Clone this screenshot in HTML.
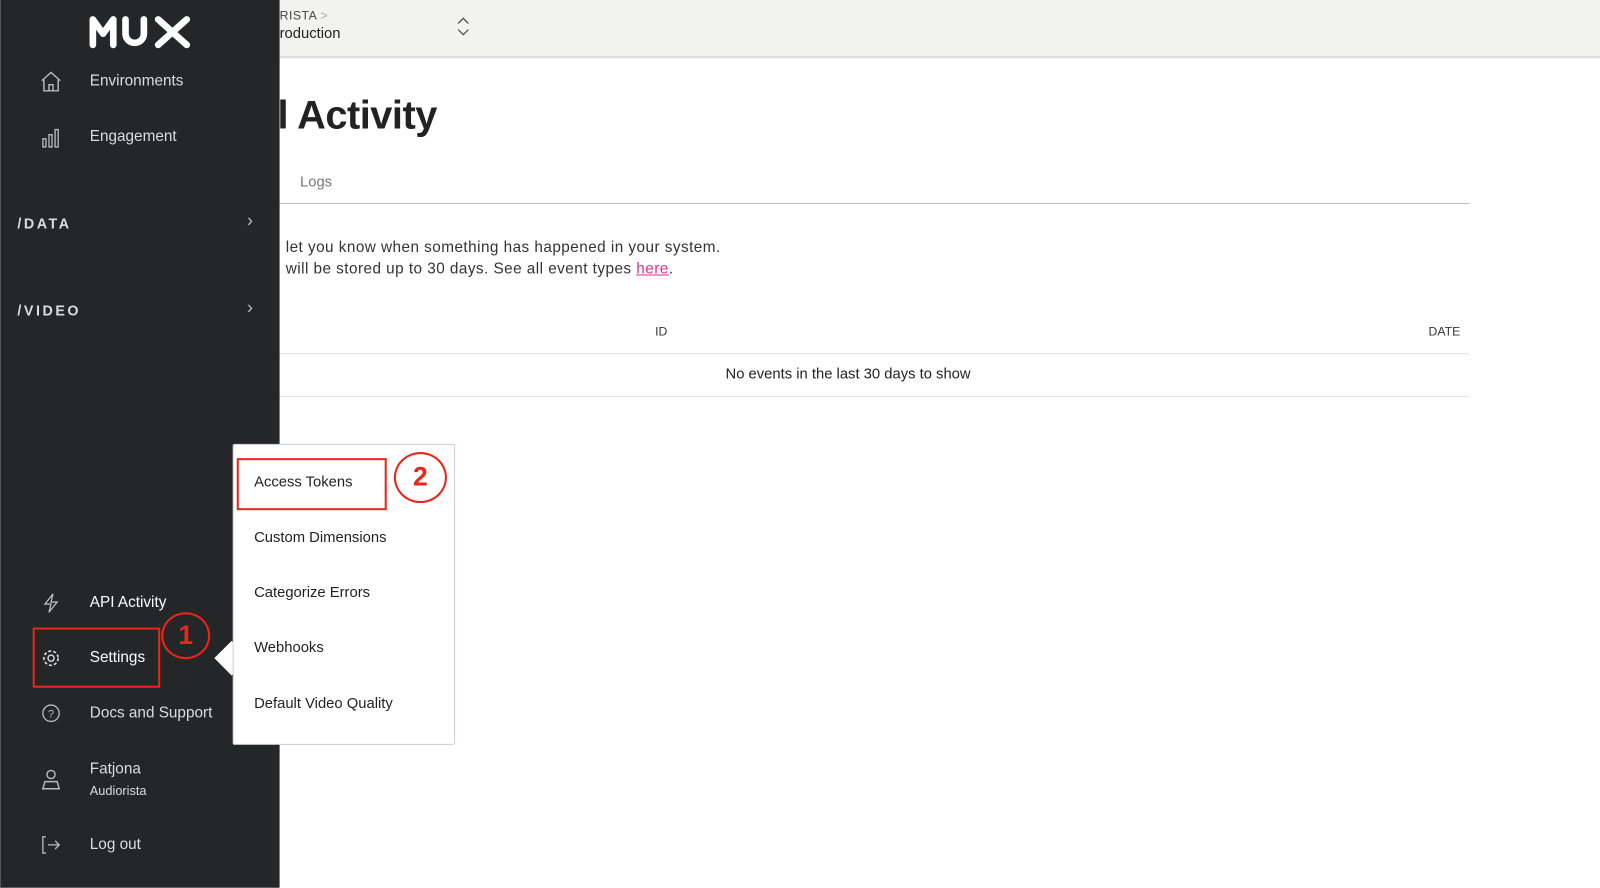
<!DOCTYPE html>
<html><head><meta charset="utf-8"><style>
*{margin:0;padding:0;box-sizing:border-box}
html,body{width:1600px;height:887px;overflow:hidden;background:#fff}
#wrap{position:absolute;left:0;top:0;width:1568px;height:870px;transform:scale(1.0204);transform-origin:0 0;font-family:"Liberation Sans",sans-serif;color:#222}
.abs{position:absolute;white-space:nowrap}
#side{position:absolute;left:0;top:0;width:274px;height:870px;background:#252628;border-left:1px solid #555}
.nav{position:absolute;left:87px;font-size:15px;color:#ddd}
.ico{position:absolute;left:38px}
.sec{position:absolute;left:16px;font-size:14px;font-weight:bold;letter-spacing:2.5px;color:#ddd}
.chev{position:absolute;left:241px;color:#bbb;font-size:18px}
#hdr{position:absolute;left:274px;top:0;width:1300px;height:57px;background:#f2f2f1;border-bottom:2px solid #dcdce2}
#menu{position:absolute;left:228px;top:435px;width:218px;height:295px;background:#fff;border:1px solid #ccd;border-radius:2px}
.mi{position:absolute;left:20px;font-size:14.5px;color:#222}
.red{position:absolute;border:2.5px solid #e8261a}
.circ{position:absolute;border:2px solid #e8261a;border-radius:50%;color:#e8261a;font-size:26px;text-align:center;font-weight:bold}
</style></head><body><div id="wrap">
<div id="hdr">
<div class="abs" style="left:0;top:8px;font-size:12px;color:#444;letter-spacing:.5px">RISTA <span style="color:#aaa">&gt;</span></div>
<div class="abs" style="left:0;top:25px;font-size:14.5px;color:#222">roduction</div>
<svg class="abs" style="left:172px;top:16px" width="16" height="20" viewBox="0 0 16 20"><path d="M3 7l5-5 5 5M3 13l5 5 5-5" fill="none" stroke="#555" stroke-width="1.3"/></svg>
</div>
<div class="abs" style="left:272px;top:92px;font-size:39px;font-weight:bold;color:#222;letter-spacing:-.5px">l Activity</div>
<div class="abs" style="left:294px;top:171px;font-size:14.5px;color:#777">Logs</div>
<div class="abs" style="left:274px;top:199px;width:1166px;height:1px;background:#bbb"></div>
<div class="abs" style="left:280px;top:232px;font-size:15px;color:#333;line-height:21px;letter-spacing:.45px">let you know when something has happened in your system.<br>will be stored up to 30 days. See all event types <span style="color:#e0308a;text-decoration:underline">here</span>.</div>
<div class="abs" style="left:642px;top:318px;font-size:12px;color:#333">ID</div>
<div class="abs" style="left:1400px;top:318px;font-size:12px;color:#333">DATE</div>
<div class="abs" style="left:274px;top:346px;width:1166px;height:1px;background:#e3e3e3"></div>
<div class="abs" style="left:711px;top:359px;font-size:14.5px;color:#222">No events in the last 30 days to show</div>
<div class="abs" style="left:274px;top:388px;width:1166px;height:1px;background:#e3e3e3"></div>

<div id="side">
<svg class="abs" style="left:86px;top:14px" width="102" height="34" viewBox="0 0 102 34"><g fill="none" stroke="#fff" stroke-width="6.5" stroke-linecap="round" stroke-linejoin="round"><path d="M4 30V5l10 14 10-14v25"/><path d="M36 5v14a9 9 0 0 0 18 0V5"/><path d="M68 5l28 25M96 5L68 30"/></g></svg>
<svg class="ico" style="top:69px" width="22" height="22" viewBox="0 0 22 22"><path d="M2 10L11 2l9 8M4 9v11h14V9M9 20v-6h4v6" fill="none" stroke="#bbb" stroke-width="1.4"/></svg>
<div class="nav" style="top:71px">Environments</div>
<svg class="ico" style="top:124px" width="22" height="22" viewBox="0 0 22 22"><path d="M3 12h3v8H3zM9 8h3v12H9zM15 3h3v17h-3z" fill="none" stroke="#bbb" stroke-width="1.3"/></svg>
<div class="nav" style="top:125px">Engagement</div>
<div class="sec" style="top:211px">/DATA</div><div class="chev" style="top:206px">&#x203A;</div>
<div class="sec" style="top:296px">/VIDEO</div><div class="chev" style="top:291px">&#x203A;</div>
<svg class="ico" style="top:580px" width="22" height="22" viewBox="0 0 22 22"><path d="M13 2L5 12h6l-2 8 8-10h-6z" fill="none" stroke="#bbb" stroke-width="1.3"/></svg>
<div class="nav" style="top:582px;color:#fff">API Activity</div>
<svg class="ico" style="top:634px" width="22" height="22" viewBox="0 0 22 22"><circle cx="11" cy="11" r="3" fill="none" stroke="#ddd" stroke-width="1.4"/><circle cx="11" cy="11" r="7" fill="none" stroke="#ddd" stroke-width="1.6" stroke-dasharray="3 2"/></svg>
<div class="nav" style="top:636px;color:#fff">Settings</div>
<svg class="ico" style="top:688px" width="22" height="22" viewBox="0 0 22 22"><circle cx="11" cy="11" r="8" fill="none" stroke="#bbb" stroke-width="1.3"/><text x="11" y="15" font-size="11" text-anchor="middle" fill="#bbb" font-family="Liberation Sans">?</text></svg>
<div class="nav" style="top:690px">Docs and Support</div>
<svg class="ico" style="top:752px" width="22" height="24" viewBox="0 0 22 24"><circle cx="11" cy="7" r="4" fill="none" stroke="#bbb" stroke-width="1.4"/><path d="M5 14h12l2 7H3z" fill="none" stroke="#bbb" stroke-width="1.4"/></svg>
<div class="nav" style="top:745px">Fatjona</div>
<div class="nav" style="top:768px;font-size:12.5px">Audiorista</div>
<svg class="ico" style="top:818px" width="22" height="20" viewBox="0 0 22 20"><path d="M6 2H3v16h3M8 10h11M15 6l4 4-4 4" fill="none" stroke="#bbb" stroke-width="1.3"/></svg>
<div class="nav" style="top:819px">Log out</div>
</div>

<div class="red" style="left:32px;top:615px;width:125px;height:59px"></div>
<div class="circ" style="left:158px;top:600px;width:48px;height:46px;line-height:40px">1</div>

<div style="position:absolute;left:215px;top:633px;width:24px;height:24px;background:#fff;transform:rotate(45deg)"></div>
<div id="menu">
<div class="mi" style="top:29px">Access Tokens</div>
<div class="mi" style="top:83px">Custom Dimensions</div>
<div class="mi" style="top:137px">Categorize Errors</div>
<div class="mi" style="top:191px">Webhooks</div>
<div class="mi" style="top:246px">Default Video Quality</div>
</div>
<div class="red" style="left:232px;top:449px;width:147px;height:51px"></div>
<div class="circ" style="left:386px;top:443px;width:52px;height:50px;line-height:45px">2</div>
</div></body></html>
